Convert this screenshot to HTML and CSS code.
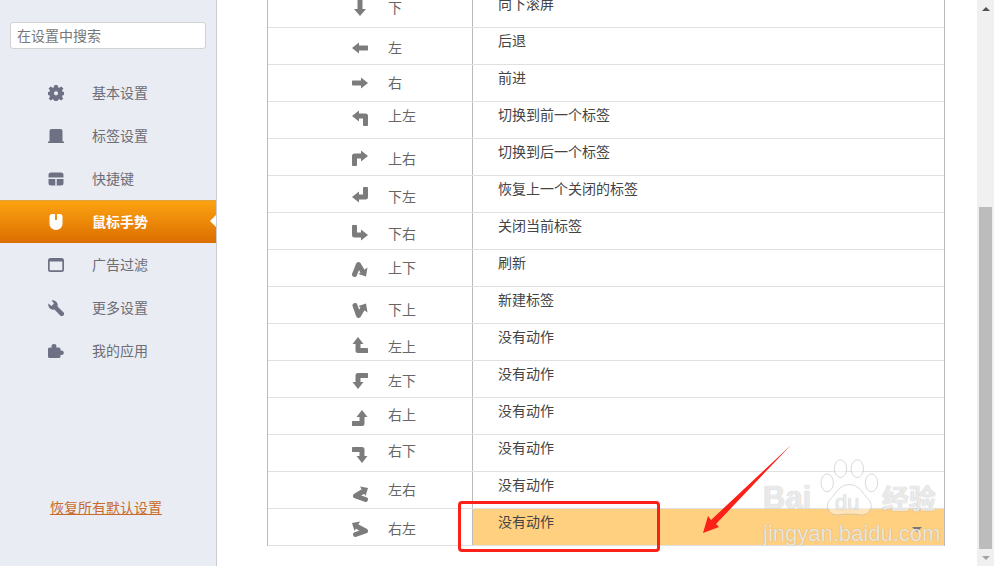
FILE: index.html
```html
<!DOCTYPE html>
<html lang="zh-CN">
<head>
    <meta charset="UTF-8">
    <meta name="viewport" content="width=device-width, initial-scale=1.0">
    <title>鼠标手势</title>
    <link rel="stylesheet" href="styles.css">
</head>
<body>
    <!-- shared arrow shapes for the gesture table -->
    <svg class="defs" width="0" height="0">
        <symbol id="a-d" viewBox="0 0 16 16"><path class="s" d="M8 1V10"/><path d="M2 9H14L8 16Z"/></symbol>
        <symbol id="a-l" viewBox="0 0 16 16"><path class="s" d="M15 8H6"/><path d="M7 2.5V13.5L0 8Z"/></symbol>
        <symbol id="a-r" viewBox="0 0 16 16"><path class="s" d="M1 8H10"/><path d="M9 2.5V13.5L16 8Z"/></symbol>
        <symbol id="a-ul" viewBox="0 0 16 16"><path class="s" d="M13.5 14.5V6H6"/><path d="M7 .5V11.5L0 6Z"/></symbol>
        <symbol id="a-ur" viewBox="0 0 16 16"><path class="s" d="M2.5 14.5V6H10"/><path d="M9 .5V11.5L16 6Z"/></symbol>
        <symbol id="a-dl" viewBox="0 0 16 16"><path class="s" d="M13.5 1.5V10H6"/><path d="M7 4.5V15.5L0 10Z"/></symbol>
        <symbol id="a-dr" viewBox="0 0 16 16"><path class="s" d="M2.5 1.5V10H10"/><path d="M9 4.5V15.5L16 10Z"/></symbol>
        <symbol id="a-ud" viewBox="0 0 16 16"><path class="s" d="M2.5 13.5L6.5 3.5L11 11"/><path d="M15.5 6.5L14 15.5L6.5 13Z"/></symbol>
        <symbol id="a-du" viewBox="0 0 16 16"><path class="s" d="M3 2.5L6.5 12.5L11 5"/><path d="M15.5 9.5L14 .5L6.5 3Z"/></symbol>
        <symbol id="a-lu" viewBox="0 0 16 16"><path class="s" d="M14.5 13.5H6V6"/><path d="M.5 7H11.5L6 0Z"/></symbol>
        <symbol id="a-ld" viewBox="0 0 16 16"><path class="s" d="M14.5 2.5H6V10"/><path d="M.5 9H11.5L6 16Z"/></symbol>
        <symbol id="a-ru" viewBox="0 0 16 16"><path class="s" d="M1.5 13.5H10V6"/><path d="M4.5 7H15.5L10 0Z"/></symbol>
        <symbol id="a-rd" viewBox="0 0 16 16"><path class="s" d="M1.5 2.5H10V10"/><path d="M4.5 9H15.5L10 16Z"/></symbol>
        <symbol id="a-lr" viewBox="0 0 16 16"><path class="s" d="M13.5 13.5L3.5 10L11 5.5"/><path d="M8 .5L16 2L13.5 10Z"/></symbol>
        <symbol id="a-rl" viewBox="0 0 16 16"><path class="s" d="M3.5 13.5L13.5 10L5 5.5"/><path d="M8 .5L0 2L2.5 10Z"/></symbol>
    </svg>

    <aside class="sidebar">
        <input class="search" type="text" placeholder="在设置中搜索">
        <nav class="nav">
            <a class="nav-item" href="#">
                <svg class="nav-icon" viewBox="0 0 16 16"><path fill-rule="evenodd" d="M6.4 0H9.6L10 2.2L11.4 2.8L13.3 1.4L15.4 3.5L14 5.4L14.6 6.8L16 6.9V10.1L14.6 10.2L14 11.6L15.2 13.5L13.3 15.4L11.4 14.2L10 14.8L9.6 16H6.4L6 14.8L4.6 14.2L2.7 15.4L.8 13.5L2 11.6L1.4 10.2L0 10.1V6.9L1.4 6.8L2 5.4L.6 3.5L2.7 1.4L4.6 2.8L6 2.2ZM8 6.2A2.1 2.1 0 1 0 8 10.4A2.1 2.1 0 1 0 8 6.2Z"/></svg>
                <span>基本设置</span>
            </a>
            <a class="nav-item" href="#">
                <svg class="nav-icon" viewBox="0 0 16 16"><path d="M3.5 1H12.5A2 2 0 0 1 14.5 3V13.5H16V15H0V13.5H1.5V3A2 2 0 0 1 3.5 1Z"/></svg>
                <span>标签设置</span>
            </a>
            <a class="nav-item" href="#">
                <svg class="nav-icon" viewBox="0 0 16 16"><path d="M3 1.5H13A2.5 2.5 0 0 1 15.5 4V6.5H.5V4A2.5 2.5 0 0 1 3 1.5ZM.5 8H7.3V14.5H3A2.5 2.5 0 0 1 .5 12ZM8.7 8H15.5V12A2.5 2.5 0 0 1 13 14.5H8.7Z"/></svg>
                <span>快捷键</span>
            </a>
            <a class="nav-item active" href="#">
                <svg class="nav-icon" viewBox="0 0 16 16"><path d="M1.5 3A3 3 0 0 1 4.5 0H7V6H9V0H11.5A3 3 0 0 1 14.5 3V10A6.5 6 0 0 1 1.5 10Z"/></svg>
                <span>鼠标手势</span>
            </a>
            <a class="nav-item" href="#">
                <svg class="nav-icon" viewBox="0 0 16 16"><path fill-rule="evenodd" d="M2.5 1H13.5A2.5 2.5 0 0 1 16 3.5V12.5A2.5 2.5 0 0 1 13.5 15H2.5A2.5 2.5 0 0 1 0 12.5V3.5A2.5 2.5 0 0 1 2.5 1ZM1.7 4.5V12.5A.8 .8 0 0 0 2.5 13.3H13.5A.8 .8 0 0 0 14.3 12.5V4.5Z"/></svg>
                <span>广告过滤</span>
            </a>
            <a class="nav-item" href="#">
                <svg class="nav-icon" viewBox="0 0 16 16"><path d="M3.6 .4A5 5 0 0 1 9.6 6.4L15.4 12.2A2.2 2.2 0 0 1 12.2 15.4L6.4 9.6A5 5 0 0 1 .4 3.6L3.5 6L6 3.5Z"/></svg>
                <span>更多设置</span>
            </a>
            <a class="nav-item" href="#">
                <svg class="nav-icon" viewBox="0 0 16 16"><path d="M1.5 4.5H3.8C3 2.5 4 1 6 1S9 2.5 8.2 4.5H11A1.5 1.5 0 0 1 12.5 6V7.6C14.4 7 15.8 8 15.8 9.7S14.4 12.4 12.5 11.8V13.5A1.5 1.5 0 0 1 11 15H1.5A1.5 1.5 0 0 1 0 13.5V6A1.5 1.5 0 0 1 1.5 4.5Z"/></svg>
                <span>我的应用</span>
            </a>
        </nav>
        <a class="restore" href="#">恢复所有默认设置</a>
    </aside>

    <main class="main">
        <div class="gesture-table">
            <div class="row g-d">
                <div class="gesture"><svg class="arrow"><use href="#a-d"/></svg><span class="label">下</span></div>
                <div class="action">向下滚屏</div>
            </div>
            <div class="row g-l">
                <div class="gesture"><svg class="arrow"><use href="#a-l"/></svg><span class="label">左</span></div>
                <div class="action">后退</div>
            </div>
            <div class="row g-r">
                <div class="gesture"><svg class="arrow"><use href="#a-r"/></svg><span class="label">右</span></div>
                <div class="action">前进</div>
            </div>
            <div class="row g-ul">
                <div class="gesture"><svg class="arrow"><use href="#a-ul"/></svg><span class="label">上左</span></div>
                <div class="action">切换到前一个标签</div>
            </div>
            <div class="row g-ur">
                <div class="gesture"><svg class="arrow"><use href="#a-ur"/></svg><span class="label">上右</span></div>
                <div class="action">切换到后一个标签</div>
            </div>
            <div class="row g-dl">
                <div class="gesture"><svg class="arrow"><use href="#a-dl"/></svg><span class="label">下左</span></div>
                <div class="action">恢复上一个关闭的标签</div>
            </div>
            <div class="row g-dr">
                <div class="gesture"><svg class="arrow"><use href="#a-dr"/></svg><span class="label">下右</span></div>
                <div class="action">关闭当前标签</div>
            </div>
            <div class="row g-ud">
                <div class="gesture"><svg class="arrow"><use href="#a-ud"/></svg><span class="label">上下</span></div>
                <div class="action">刷新</div>
            </div>
            <div class="row g-du">
                <div class="gesture"><svg class="arrow"><use href="#a-du"/></svg><span class="label">下上</span></div>
                <div class="action">新建标签</div>
            </div>
            <div class="row g-lu">
                <div class="gesture"><svg class="arrow"><use href="#a-lu"/></svg><span class="label">左上</span></div>
                <div class="action">没有动作</div>
            </div>
            <div class="row g-ld">
                <div class="gesture"><svg class="arrow"><use href="#a-ld"/></svg><span class="label">左下</span></div>
                <div class="action">没有动作</div>
            </div>
            <div class="row g-ru">
                <div class="gesture"><svg class="arrow"><use href="#a-ru"/></svg><span class="label">右上</span></div>
                <div class="action">没有动作</div>
            </div>
            <div class="row g-rd">
                <div class="gesture"><svg class="arrow"><use href="#a-rd"/></svg><span class="label">右下</span></div>
                <div class="action">没有动作</div>
            </div>
            <div class="row g-lr">
                <div class="gesture"><svg class="arrow"><use href="#a-lr"/></svg><span class="label">左右</span></div>
                <div class="action">没有动作</div>
            </div>
            <div class="row g-rl">
                <div class="gesture"><svg class="arrow"><use href="#a-rl"/></svg><span class="label">右左</span></div>
                <div class="action selected">没有动作<span class="caret"></span></div>
            </div>
        </div>
    </main>

    <div class="scrollbar">
        <div class="scroll-btn"><span class="tri-up"></span></div>
        <div class="scroll-track"><div class="scroll-thumb"></div></div>
        <div class="scroll-btn"><span class="tri-down"></span></div>
    </div>

    <!-- screenshot annotation: red box and arrow -->
    <div class="mark-box"></div>
    <svg class="mark-arrow" viewBox="0 0 994 566"><path d="M791 445L716 524L719 527L703 533L708 516L711 520Z"/></svg>

    <!-- watermark -->
    <div class="watermark">
        <svg class="paw" viewBox="0 0 80 70">
            <ellipse cx="12" cy="28" rx="7" ry="10"/>
            <ellipse cx="27" cy="12" rx="7" ry="10"/>
            <ellipse cx="46" cy="12" rx="7" ry="10"/>
            <ellipse cx="62" cy="28" rx="7" ry="10"/>
            <path d="M37 30C26 30 22 40 16 46C8 54 14 66 26 64C32 63 42 63 48 64C60 66 66 54 58 46C52 40 48 30 37 30Z"/>
        </svg>
        <span class="wm-bai">Bai</span>
        <span class="wm-du">du</span>
        <span class="wm-jy">经验</span>
        <span class="wm-url">jingyan.baidu.com</span>
    </div>
</body>
</html>
```

FILE: styles.css
```css
* {
    box-sizing: border-box;
}

html, body {
    height: 566px;
}

body {
    position: relative;
    display: flex;
    margin: 0;
    overflow: hidden;
    background-color: #fff;
    font-family: "Noto Sans CJK SC", "Liberation Sans", sans-serif;
    font-size: 14px;
}

.defs {
    position: absolute;
}

.defs path {
    fill: #7c7c7c;
}

.defs .s {
    fill: none;
    stroke: #7c7c7c;
    stroke-width: 5;
    stroke-linejoin: round;
    stroke-linecap: round;
}

/* sidebar */
.sidebar {
    display: flex;
    flex-direction: column;
    flex: none;
    width: 217px;
    padding: 22px 0 49px;
    background-color: #e9ecf2;
    border-right: 1px solid #c8ccd2;
}

.search {
    width: 196px;
    height: 27px;
    margin-left: 10px;
    padding: 0 6px 2px;
    border: 1px solid #d2d2d2;
    border-radius: 3px;
    background-color: #fff;
    font: inherit;
    outline: none;
}

.search::placeholder {
    color: #777;
    opacity: 1;
}

.nav {
    margin-top: 22px;
}

.nav-item {
    position: relative;
    display: flex;
    align-items: center;
    gap: 28px;
    height: 43px;
    padding-left: 48px;
    color: #6d6d78;
    text-decoration: none;
    line-height: 20px;
}

.nav-item span {
    padding-bottom: 2px;
}

.nav-icon {
    flex: none;
    width: 16px;
    height: 16px;
    fill: #6e7084;
}

.nav-item.active {
    background: linear-gradient(#fca311, #dc6e00);
    border-top: 1px solid #dfa23c;
    color: #fff;
    font-weight: bold;
}

.nav-item.active .nav-icon {
    fill: #fff;
}

.nav-item.active::after {
    content: "";
    position: absolute;
    right: 0;
    top: 14px;
    border: 6px solid transparent;
    border-left: 0;
    border-right-color: #fff;
}

.restore {
    margin-top: auto;
    margin-left: 50px;
    color: #c96a2b;
    line-height: 20px;
}

/* gesture table */
.main {
    flex: 1;
    padding-left: 50px;
}

.gesture-table {
    width: 678px;
    margin-top: -9px;
    border-left: 1px solid #bbb;
    border-right: 1px solid #bbb;
}

.row {
    display: flex;
    height: 37px;
    border-bottom: 1px solid #e0e0e0;
}

.gesture {
    display: flex;
    align-items: flex-start;
    flex: none;
    width: 204px;
    padding-left: 84px;
    color: #666;
    line-height: 18px;
}

.arrow {
    flex: none;
    width: 16px;
    height: 16px;
    margin-right: 20px;
}

.action {
    flex: 1;
    display: flex;
    padding: 2px 0 0 25px;
    border-left: 1px solid #bbb;
    color: #444;
    line-height: 20px;
}

.selected {
    background-color: #ffd080;
}

.caret {
    width: 0;
    height: 0;
    margin: 16px 22px 0 auto;
    border: 5px solid transparent;
    border-top-color: #777;
    border-bottom: 0;
}

/* icon and label sit a little differently in each row */
.g-d .arrow { margin-top: 9px; }
.g-d .label { margin-top: 7px; }
.g-l .arrow { margin-top: 12px; }
.g-l .label { margin-top: 10px; }
.g-r .arrow { margin-top: 10px; }
.g-r .label { margin-top: 8px; }
.g-ul .arrow { margin-top: 8px; }
.g-ul .label { margin-top: 4px; }
.g-ur .arrow { margin-top: 11px; }
.g-ur .label { margin-top: 10px; }
.g-dl .arrow { margin-top: 11px; }
.g-dl .label { margin-top: 11px; }
.g-dr .arrow { margin-top: 12px; }
.g-dr .label { margin-top: 11px; }
.g-ud .arrow { margin-top: 11px; }
.g-ud .label { margin-top: 8px; }
.g-du .arrow { margin-top: 16px; }
.g-du .label { margin-top: 13px; }
.g-lu .arrow { margin-top: 13px; }
.g-lu .label { margin-top: 13px; }
.g-ld .arrow { margin-top: 12px; }
.g-ld .label { margin-top: 10px; }
.g-ru .arrow { margin-top: 12px; }
.g-ru .label { margin-top: 7px; }
.g-rd .arrow { margin-top: 12px; }
.g-rd .label { margin-top: 6px; }
.g-lr .arrow { margin-top: 14px; }
.g-lr .label { margin-top: 8px; }
.g-rl .arrow { margin-top: 12px; }
.g-rl .label { margin-top: 10px; }

/* scrollbar */
.scrollbar {
    display: flex;
    flex-direction: column;
    flex: none;
    width: 17px;
    background-color: #f0f0f0;
}

.scroll-btn {
    display: flex;
    align-items: center;
    justify-content: center;
    flex: none;
    height: 17px;
}

.tri-up, .tri-down {
    width: 0;
    height: 0;
    border: 4px solid transparent;
}

.tri-up {
    border-top: 0;
    border-bottom-color: #505050;
}

.tri-down {
    border-bottom: 0;
    border-top-color: #a3a3a3;
}

.scroll-track {
    flex: 1;
    padding: 190px 2px 0;
}

.scroll-thumb {
    height: 342px;
    background-color: #bcbcbc;
}

/* annotation overlays */
.mark-box {
    position: absolute;
    left: 458px;
    top: 501px;
    width: 202px;
    height: 51px;
    border: 3px solid #fa2218;
    border-radius: 4px;
}

.mark-arrow {
    position: absolute;
    left: 0;
    top: 0;
    width: 994px;
    height: 566px;
    fill: #fa2218;
}

.watermark {
    position: absolute;
    left: 763px;
    top: 458px;
    width: 180px;
    height: 90px;
    color: rgba(255, 255, 255, 0.75);
    text-shadow: 0 0 1px rgba(110, 110, 110, 0.6);
}

.paw {
    position: absolute;
    left: 53px;
    top: 0;
    width: 72px;
    height: 62px;
    fill: rgba(255, 255, 255, 0.45);
    stroke: rgba(170, 170, 170, 0.5);
    stroke-width: 1;
}

.wm-bai, .wm-du, .wm-jy, .wm-url {
    position: absolute;
    white-space: nowrap;
}

.wm-bai {
    left: 0;
    top: 20px;
    font: bold 31px/40px "Liberation Sans", sans-serif;
}

.wm-du {
    left: 72px;
    top: 31px;
    font: 22px/28px "Liberation Sans", sans-serif;
}

.wm-jy {
    left: 119px;
    top: 20px;
    font: bold 27px/40px "Noto Sans CJK SC", sans-serif;
}

.wm-url {
    left: 0;
    top: 62px;
    font: 22px/28px "Liberation Sans", sans-serif;
}
```
